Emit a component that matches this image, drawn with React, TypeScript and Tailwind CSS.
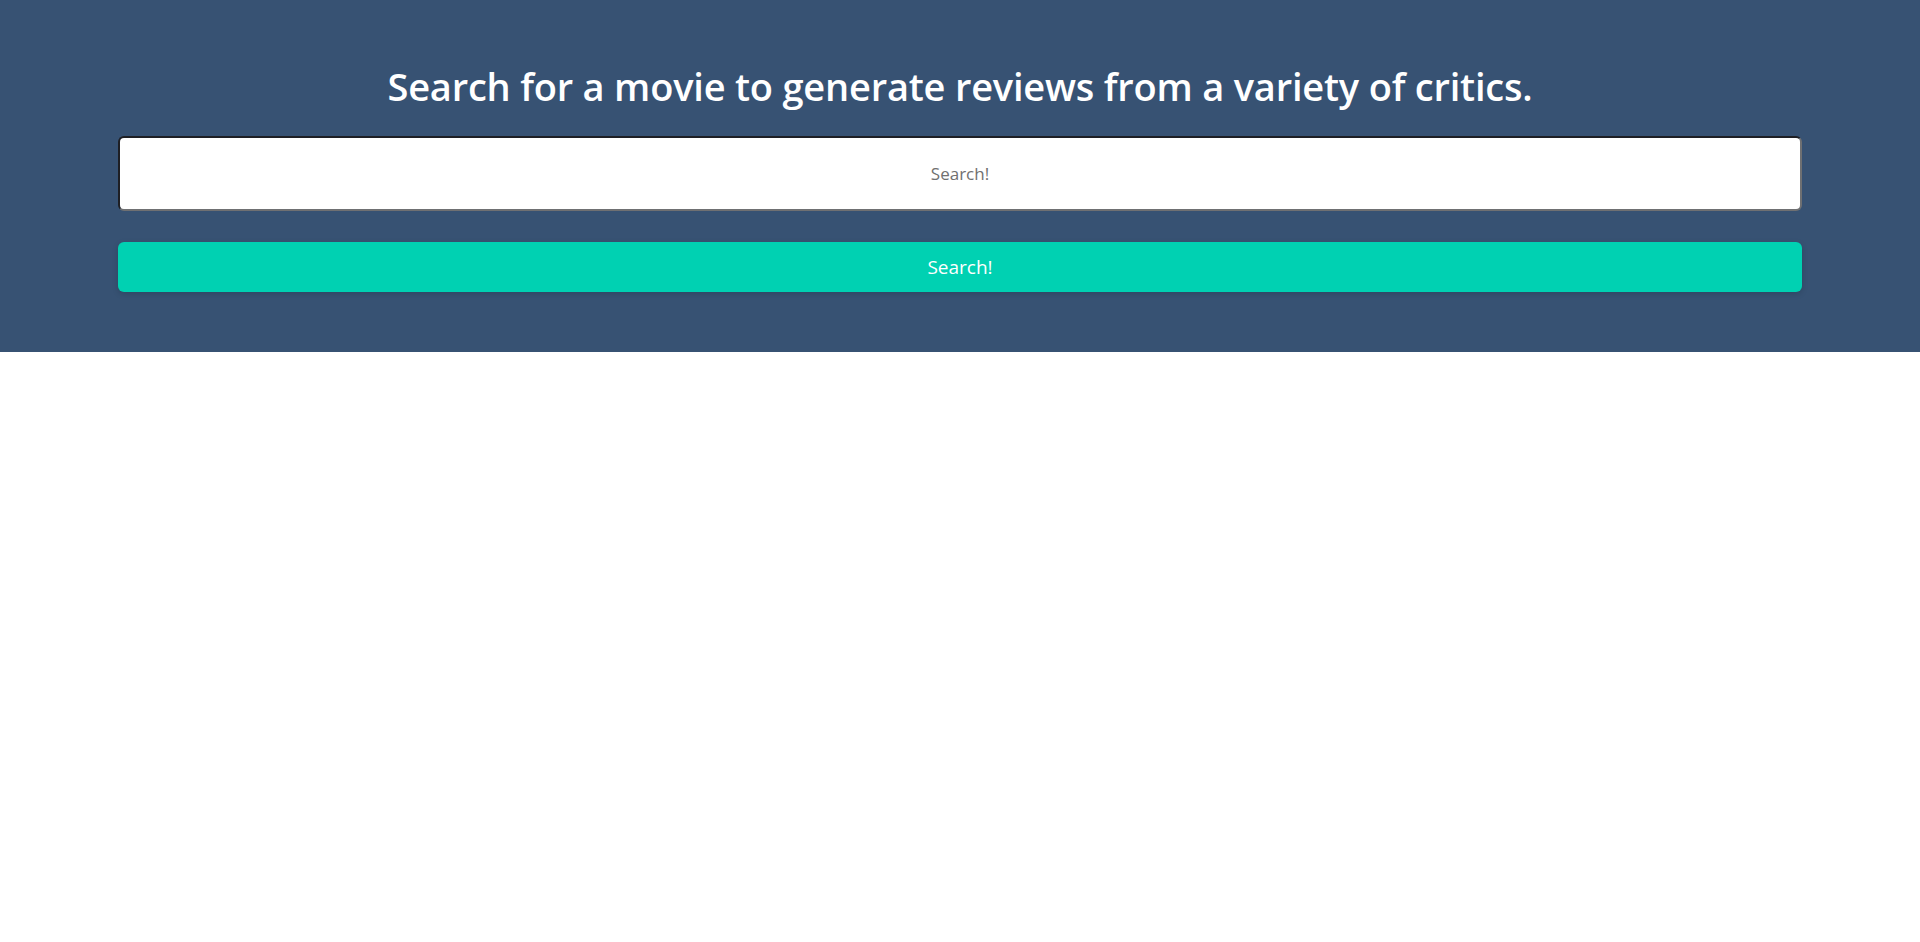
export default function App() {
  return (
    <div className="min-h-screen bg-white" style={{ fontFamily: '"Open Sans", "Noto Sans", sans-serif' }}>
      <section className="bg-[#375273] px-[118px] pt-[58px] pb-[60px]">
        <h1 className="text-center text-[38px] font-semibold leading-[56px] text-white tracking-[-0.2px]">
          Search for a movie to generate reviews from a variety of critics.
        </h1>
        <div className="mt-[22px] flex flex-col gap-[31px]">
          <input
            type="text"
            placeholder="Search!"
            className="h-[75px] w-full rounded-[6px] border-2 border-t-[#1e1f24] border-l-[#1e1f24] border-b-[#6f7072] border-r-[#6f7072] bg-white text-center text-[17px] text-[#333] placeholder:text-[#707070] outline-none"
          />
          <button className="h-[50px] w-full rounded-[6px] bg-[#00d1b2] text-[19px] text-white shadow-[0_2px_6px_rgba(0,0,0,0.15)]">
            Search!
          </button>
        </div>
      </section>
    </div>
  );
}
